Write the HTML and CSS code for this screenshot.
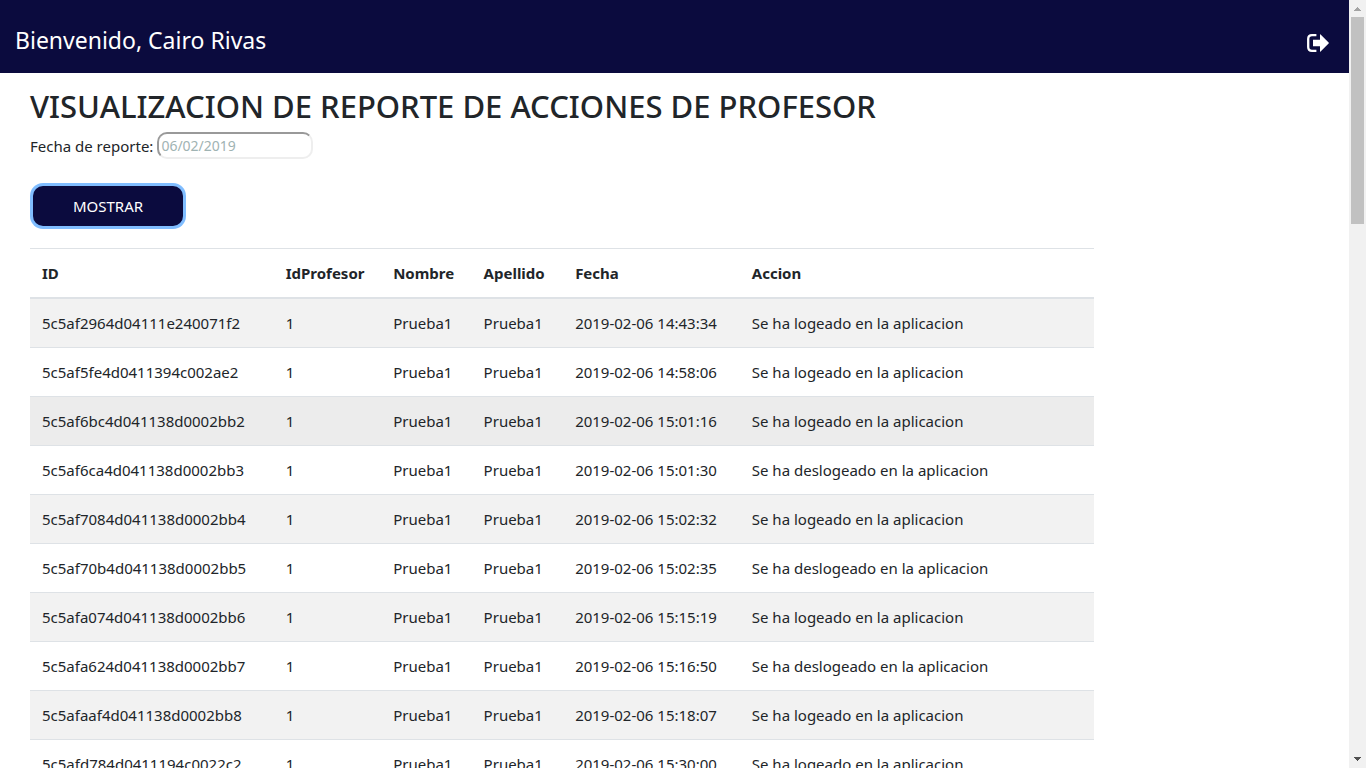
FILE: index.html
```html
<!DOCTYPE html>
<html lang="es">
<head>
<meta charset="utf-8">
<title>Reporte de acciones de profesor</title>
<link rel="stylesheet" href="styles.css">
</head>
<body>
<div class="window">
  <div class="page">
    <header class="topbar">
      <p class="welcome">Bienvenido, Cairo Rivas</p>
      <a class="logout" href="#" aria-label="Salir">
        <svg width="22" height="20" viewBox="0 0 22 20" aria-hidden="true">
          <path d="M9.4 2.2H5Q1.2 2.2 1.2 6V14Q1.2 17.8 5 17.8H9.4" fill="none" stroke="currentColor" stroke-width="2.3"/>
          <path d="M6 6.8H13V1.6Q13 .9 13.6 1.4L21.6 9.4Q22.2 10 21.6 10.6L13.6 18.6Q13 19.1 13 18.4V13.2H6Z" fill="currentColor"/>
        </svg>
      </a>
    </header>
    <main class="content">
      <h1 class="title">VISUALIZACION DE REPORTE DE ACCIONES DE PROFESOR</h1>
      <form class="report-form">
        <div class="field">
          <label for="fecha">Fecha de reporte:</label>
          <input class="date" id="fecha" type="text" placeholder="06/02/2019">
        </div>
        <button class="show" type="button">MOSTRAR</button>
      </form>
      <table class="report">
        <colgroup>
          <col class="col-id"><col class="col-prof"><col class="col-name"><col class="col-last"><col class="col-date"><col>
        </colgroup>
        <thead>
          <tr><th>ID</th><th>IdProfesor</th><th>Nombre</th><th>Apellido</th><th>Fecha</th><th>Accion</th></tr>
        </thead>
        <tbody>
          <tr><td>5c5af2964d04111e240071f2</td><td>1</td><td>Prueba1</td><td>Prueba1</td><td>2019-02-06 14:43:34</td><td>Se ha logeado en la aplicacion</td></tr>
          <tr><td>5c5af5fe4d0411394c002ae2</td><td>1</td><td>Prueba1</td><td>Prueba1</td><td>2019-02-06 14:58:06</td><td>Se ha logeado en la aplicacion</td></tr>
          <tr class="active"><td>5c5af6bc4d041138d0002bb2</td><td>1</td><td>Prueba1</td><td>Prueba1</td><td>2019-02-06 15:01:16</td><td>Se ha logeado en la aplicacion</td></tr>
          <tr><td>5c5af6ca4d041138d0002bb3</td><td>1</td><td>Prueba1</td><td>Prueba1</td><td>2019-02-06 15:01:30</td><td>Se ha deslogeado en la aplicacion</td></tr>
          <tr><td>5c5af7084d041138d0002bb4</td><td>1</td><td>Prueba1</td><td>Prueba1</td><td>2019-02-06 15:02:32</td><td>Se ha logeado en la aplicacion</td></tr>
          <tr><td>5c5af70b4d041138d0002bb5</td><td>1</td><td>Prueba1</td><td>Prueba1</td><td>2019-02-06 15:02:35</td><td>Se ha deslogeado en la aplicacion</td></tr>
          <tr><td>5c5afa074d041138d0002bb6</td><td>1</td><td>Prueba1</td><td>Prueba1</td><td>2019-02-06 15:15:19</td><td>Se ha logeado en la aplicacion</td></tr>
          <tr><td>5c5afa624d041138d0002bb7</td><td>1</td><td>Prueba1</td><td>Prueba1</td><td>2019-02-06 15:16:50</td><td>Se ha deslogeado en la aplicacion</td></tr>
          <tr><td>5c5afaaf4d041138d0002bb8</td><td>1</td><td>Prueba1</td><td>Prueba1</td><td>2019-02-06 15:18:07</td><td>Se ha logeado en la aplicacion</td></tr>
          <tr><td>5c5afd784d0411194c0022c2</td><td>1</td><td>Prueba1</td><td>Prueba1</td><td>2019-02-06 15:30:00</td><td>Se ha logeado en la aplicacion</td></tr>
        </tbody>
      </table>
    </main>
  </div>
  <div class="scrollbar" aria-hidden="true">
    <svg class="arrow arrow-up" width="17" height="17" viewBox="0 0 17 17" shape-rendering="crispEdges"><path d="M5 11V10H6V9H7V8H8V7H9V8H10V9H11V10H12V11Z" fill="currentColor"/></svg>
    <div class="track"><div class="thumb"></div></div>
    <svg class="arrow" width="17" height="17" viewBox="0 0 17 17" shape-rendering="crispEdges"><path d="M5 6V7H6V8H7V9H8V10H9V9H10V8H11V7H12V6Z" fill="currentColor"/></svg>
  </div>
</div>
</body>
</html>
```
FILE: styles.css
```css
* { box-sizing: border-box; }

body {
  margin: 0;
  background: #fff;
  color: #212529;
  font-family: "Noto Sans", "Open Sans", sans-serif;
  font-size: 15px;
  line-height: 24px;
}

.window {
  display: flex;
  height: 100vh;
  overflow: hidden;
}

.page {
  flex: 1;
  min-width: 0;
  overflow: hidden;
}

.topbar {
  display: flex;
  align-items: center;
  justify-content: space-between;
  padding: 24px 20px 17px 15px;
  background: #0b0b3e;
  color: #fff;
}

.welcome {
  margin: 0;
  font-size: 23px;
  line-height: 32px;
}

.logout {
  display: flex;
  padding-top: 6px;
  color: #fff;
}

.content {
  width: calc(100% * 10 / 12);
  padding: 14px 30px 0;
}

.title {
  margin: 0 0 7px;
  font-size: 31px;
  font-weight: 500;
  line-height: 38px;
  white-space: nowrap;
}

.report-form {
  display: flex;
  flex-direction: column;
  align-items: flex-start;
  gap: 27px;
  margin-bottom: 22px;
}

.field {
  display: flex;
  align-items: center;
  gap: 4px;
}

.date {
  width: 156px;
  height: 27px;
  padding: 0 2px;
  border: 2px solid;
  border-color: #999 #eee #eee #999;
  border-radius: 10px;
  background: #fff;
  font: inherit;
  font-size: 14px;
}

.date::placeholder {
  color: #9fb3b3;
  opacity: 1;
}

.show {
  width: 150px;
  height: 40px;
  margin: 0 3px;
  padding: 0;
  border: 0;
  border-radius: 10px;
  background: #0b0b3e;
  box-shadow: 0 0 0 3px #80bdff;
  color: #fff;
  font: inherit;
}

.report {
  width: 100%;
  table-layout: fixed;
  border-collapse: collapse;
}

.report th,
.report td {
  padding: 12px;
  border-top: 1px solid #dee2e6;
  text-align: left;
  white-space: nowrap;
}

.report thead th {
  border-bottom: 2px solid #dee2e6;
}

.report tbody tr:nth-child(odd) { background: #f2f2f2; }
.report tbody tr.active { background: #ececec; }

.col-id { width: 22.9%; }
.col-prof { width: 10.1%; }
.col-name { width: 8.5%; }
.col-last { width: 8.6%; }
.col-date { width: 16.6%; }

.scrollbar {
  display: flex;
  flex-direction: column;
  width: 17px;
  background: #f1f1f1;
}

.arrow { color: #505050; }
.arrow-up { color: #a3a3a3; }

.track {
  flex: 1;
  padding: 0 2px;
}

.thumb {
  height: 28.2%;
  background: #c1c1c1;
}
```
